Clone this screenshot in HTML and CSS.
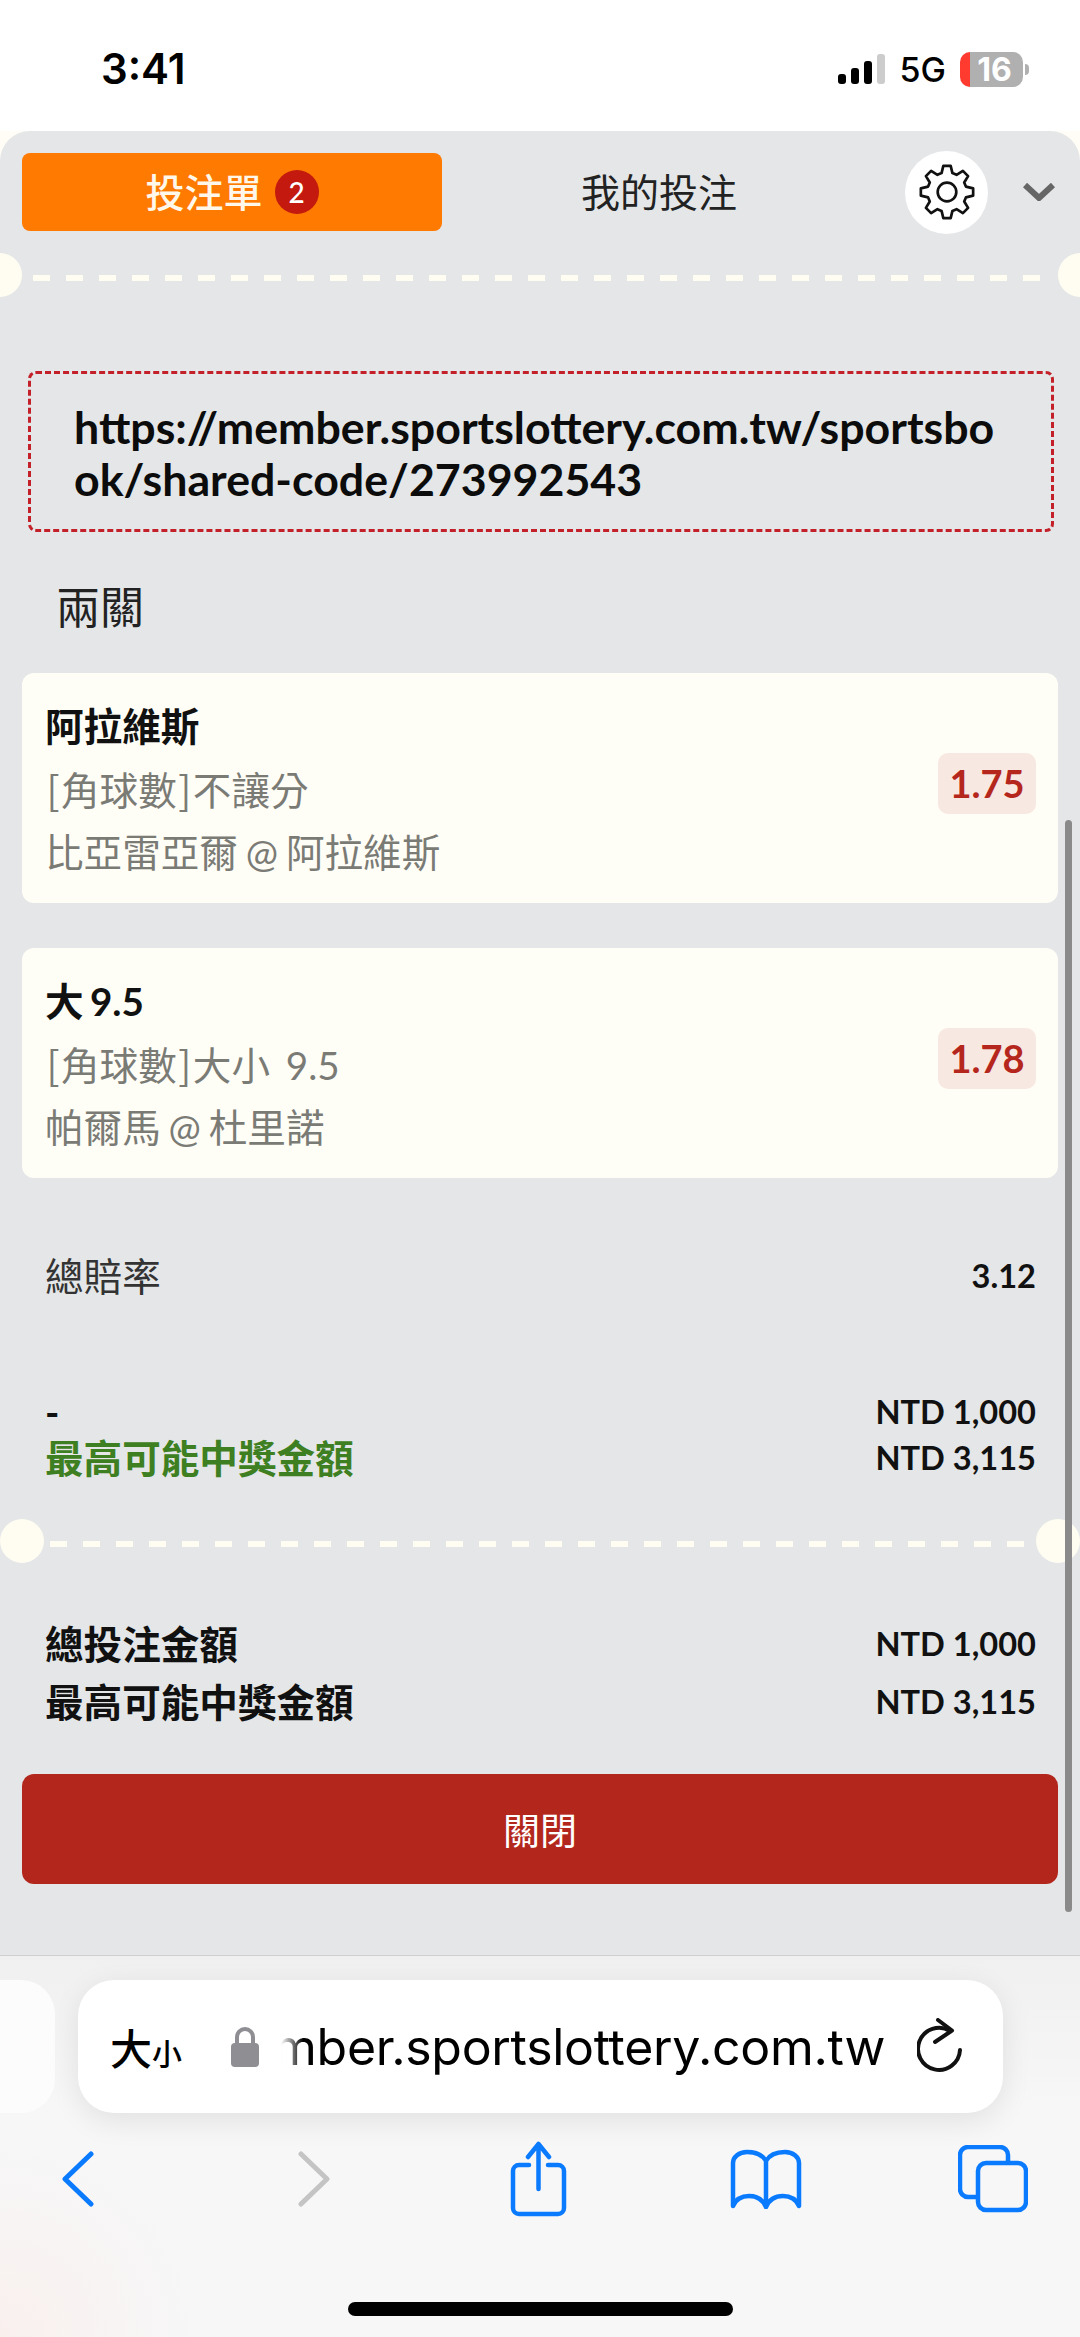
FILE: index.html
```html
<!DOCTYPE html>
<html lang="zh-Hant">

<head>
    <meta charset="UTF-8">
    <meta name="viewport" content="width=device-width, initial-scale=1.0">
    <title>投注單</title>
    <link rel="stylesheet" href="styles.css">
</head>

<body>
    <!-- Status bar -->
    <header class="status-bar">
        <span class="clock">3:41</span>
        <div class="status-icons">
            <div class="signal">
                <i class="bar bar-1"></i>
                <i class="bar bar-2"></i>
                <i class="bar bar-3"></i>
                <i class="bar bar-4"></i>
            </div>
            <span class="network">5G</span>
            <div class="battery"><span class="battery-num">16</span></div>
            <i class="battery-nub"></i>
        </div>
    </header>

    <!-- Bet slip panel -->
    <main class="panel">
        <div class="tabs">
            <button class="tab tab-active">投注單<span class="badge">2</span></button>
            <button class="tab tab-plain">我的投注</button>
            <button class="gear-btn">
                <svg class="gear" viewBox="-28 -28 56 56" fill="none" stroke="#111" stroke-width="2.6" stroke-linejoin="round">
                    <polygon points="-5.24,-18.26 -3.55,-25.25 3.55,-25.25 5.24,-18.26 9.21,-16.62 15.34,-20.36 20.36,-15.34 16.62,-9.21 18.26,-5.24 25.25,-3.55 25.25,3.55 18.26,5.24 16.62,9.21 20.36,15.34 15.34,20.36 9.21,16.62 5.24,18.26 3.55,25.25 -3.55,25.25 -5.24,18.26 -9.21,16.62 -15.34,20.36 -20.36,15.34 -16.62,9.21 -18.26,5.24 -25.25,3.55 -25.25,-3.55 -18.26,-5.24 -16.62,-9.21 -20.36,-15.34 -15.34,-20.36 -9.21,-16.62" />
                    <circle cx="0" cy="0" r="9" />
                </svg>
            </button>
            <svg class="collapse" viewBox="0 0 32 18" fill="none" stroke="#666" stroke-width="6">
                <path d="M2 2 L16 15 L30 2" />
            </svg>
        </div>

        <div class="sep sep-top"></div>

        <div class="share-link">https://member.sportslottery.com.tw/sportsbook/shared-code/273992543</div>

        <h2 class="parlay">兩關</h2>

        <!-- Selections -->
        <section class="card">
            <div class="card-text">
                <p class="pick">阿拉維斯</p>
                <p class="market"><span class="bracket">[</span>角球數<span class="bracket">]</span>不讓分</p>
                <p class="market market-at">比亞雷亞爾 @ 阿拉維斯</p>
            </div>
            <span class="odds">1.75</span>
        </section>

        <section class="card card-next">
            <div class="card-text">
                <p class="pick">大 9.5</p>
                <p class="market market-num"><span class="bracket">[</span>角球數<span class="bracket">]</span>大小 9.5</p>
                <p class="market market-at">帕爾馬 @ 杜里諾</p>
            </div>
            <span class="odds">1.78</span>
        </section>

        <div class="row row-odds">
            <span class="row-plain">總賠率</span>
            <b class="row-num">3.12</b>
        </div>

        <div class="stake">
            <div class="row row-stake">
                <b>-</b>
                <b class="row-num">NTD 1,000</b>
            </div>
            <div class="row row-stake">
                <b class="win">最高可能中獎金額</b>
                <b class="row-num">NTD 3,115</b>
            </div>
        </div>

        <div class="sep sep-mid"></div>

        <div class="totals">
            <div class="row row-total">
                <b>總投注金額</b>
                <b class="row-num">NTD 1,000</b>
            </div>
            <div class="row row-total">
                <b>最高可能中獎金額</b>
                <b class="row-num">NTD 3,115</b>
            </div>
        </div>

        <button class="close-btn">關閉</button>

        <i class="scrollbar"></i>
    </main>

    <!-- Browser toolbar -->
    <footer class="toolbar">
        <div class="address-row">
            <div class="prev-pill"></div>
            <div class="address">
                <span class="text-size">大<small>小</small></span>
                <svg class="lock" viewBox="0 0 28 40">
                    <path d="M6 18 V10 a8 8 0 0 1 16 0 V18" fill="none" stroke="#8e8e93" stroke-width="4" />
                    <rect x="0" y="16" width="28" height="24" rx="4" fill="#8e8e93" />
                </svg>
                <div class="url">mber.sportslottery.com.tw</div>
                <svg class="reload" viewBox="0 0 46 58" fill="none" stroke="#111" stroke-width="4" stroke-linecap="round" stroke-linejoin="round">
                    <path d="M33 13 A21 21 0 1 0 43 32" />
                    <path d="M21 2 L35 12.5 L18 24" />
                </svg>
            </div>
        </div>

        <nav class="nav-icons">
            <svg class="nav-back" viewBox="0 0 32 56" fill="none" stroke="#0a7aff" stroke-width="5" stroke-linecap="round" stroke-linejoin="round">
                <path d="M29 3 L3 28 L29 53" />
            </svg>
            <svg class="nav-forward" viewBox="0 0 32 56" fill="none" stroke="#c4c4c4" stroke-width="5" stroke-linecap="round" stroke-linejoin="round">
                <path d="M3 3 L29 28 L3 53" />
            </svg>
            <svg class="nav-share" viewBox="0 0 57 76" fill="none" stroke="#0a7aff" stroke-width="4.5" stroke-linecap="round" stroke-linejoin="round">
                <path d="M19 24 H9 a6 6 0 0 0 -6 6 V67 a6 6 0 0 0 6 6 H48 a6 6 0 0 0 6 -6 V30 a6 6 0 0 0 -6 -6 H38" />
                <path d="M28.5 48 V3 M18 16 L28.5 3 L39 16" />
            </svg>
            <svg class="nav-book" viewBox="0 0 72 60" fill="none" stroke="#0a7aff" stroke-width="4.5" stroke-linejoin="round">
                <path d="M36 12 C32 5 25 3 17 3 C9 3 3 8 3 14 V57 C6 50 12 47 19 47 C27 47 33 51 36 58 C39 51 45 47 53 47 C60 47 66 50 69 57 V14 C69 8 63 3 55 3 C47 3 40 5 36 12 Z M36 12 V58" />
            </svg>
            <svg class="nav-tabs" viewBox="0 0 70 68" fill="none" stroke="#0a7aff" stroke-width="4.5">
                <path d="M50 17 V10 a8 8 0 0 0 -8 -8 H10 a8 8 0 0 0 -8 8 V44 a8 8 0 0 0 8 8 h8" />
                <rect x="20" y="18" width="48" height="47" rx="8" />
            </svg>
        </nav>

        <div class="home-bar"></div>
    </footer>
</body>

</html>
```

FILE: styles.css
```css
/* Basic layout */

* {
    box-sizing: border-box;
}

body {
    margin: 0;
    width: 1080px;
    height: 2337px;
    overflow: hidden;
    background-color: #fffdf5;
    font-family: Lato, "Noto Sans CJK TC", sans-serif;
    color: #111;
}

p,
h2 {
    margin: 0;
    font-weight: normal;
}

button {
    border: 0;
    padding: 0;
    font-family: inherit;
}

/* Status bar */

.status-bar {
    height: 131px;
    background-color: #fff;
    display: flex;
    justify-content: space-between;
    padding: 44px 51px 0 101px;
}

.clock {
    font-family: Inter, sans-serif;
    font-size: 42px;
    font-weight: 600;
    line-height: 50px;
    color: #000;
}

.status-icons {
    display: flex;
    height: 50px;
    align-items: center;
}

.signal {
    display: flex;
    align-items: flex-end;
    gap: 5px;
    height: 30px;
}

.bar {
    width: 8px;
    border-radius: 3px;
    background-color: #000;
}

.bar-1 {
    height: 10px;
}

.bar-2 {
    height: 16px;
}

.bar-3 {
    height: 23px;
}

.bar-4 {
    height: 30px;
    background-color: #ccc;
}

.network {
    font-family: Inter, sans-serif;
    font-size: 34px;
    font-weight: 500;
    margin-left: 15px;
    color: #000;
}

.battery {
    width: 63px;
    height: 35px;
    margin-left: 14px;
    border-radius: 10px;
    background: linear-gradient(to right, #ff3b30 10px, #b0b0b0 10px);
    color: #fff;
    text-align: center;
    font-family: Inter, sans-serif;
    font-size: 32px;
    font-weight: 700;
    line-height: 35px;
}

.battery-num {
    margin-left: 6px;
}

.battery-nub {
    width: 4px;
    height: 11px;
    margin-left: 2px;
    border-radius: 0 4px 4px 0;
    background-color: #b0b0b0;
}

/* Panel */

.panel {
    position: relative;
    height: 1824px;
    padding: 20px 22px 0;
    background-color: #e4e6e8;
    border-radius: 30px 30px 0 0;
    overflow: hidden;
}

.tabs {
    display: flex;
    align-items: center;
    height: 82px;
}

.tab {
    font-size: 39px;
    line-height: 78px;
    height: 78px;
    background: none;
}

.tab-active {
    width: 420px;
    display: flex;
    justify-content: center;
    align-items: center;
    background-color: #ff7a00;
    border-radius: 8px;
    color: #fff8ea;
    font-weight: 500;
}

.tab-plain {
    width: 434px;
    color: #222;
}

.badge {
    width: 44px;
    height: 44px;
    margin-left: 12px;
    border-radius: 50%;
    background-color: #c4190f;
    color: #fff;
    font-size: 28px;
    font-weight: 500;
    line-height: 44px;
    text-align: center;
}

.gear-btn {
    width: 83px;
    height: 83px;
    margin-left: 29px;
    border-radius: 50%;
    background-color: #fff;
    display: flex;
    align-items: center;
    justify-content: center;
}

.gear {
    width: 58px;
    height: 58px;
}

.collapse {
    width: 32px;
    height: 18px;
    margin-left: 35px;
}

/* Dashed ticket separator */

.sep {
    position: relative;
    height: 44px;
    margin-left: -22px;
    margin-right: -22px;
}

.sep::before,
.sep::after {
    content: "";
    position: absolute;
    top: 0;
    width: 44px;
    height: 44px;
    border-radius: 50%;
    background-color: #fffdf2;
}

.sep-top {
    margin-top: 20px;
    background: repeating-linear-gradient(to right, #fffdf2 0 17px, transparent 17px 33px) 33px 22px / 1017px 6px no-repeat;
}

.sep-top::before {
    left: -22px;
}

.sep-top::after {
    right: -22px;
}

.sep-mid {
    margin-top: 38px;
    background: repeating-linear-gradient(to right, #fffdf2 0 17px, transparent 17px 33px) 50px 22px / 982px 6px no-repeat;
}

.sep-mid::before {
    left: 0;
}

.sep-mid::after {
    right: 0;
}

/* Shared link */

.share-link {
    margin: 74px 4px 0 6px;
    height: 161px;
    padding: 27px 44px 0 43px;
    border: 3px dashed #c4202a;
    border-radius: 8px;
    font-size: 44.7px;
    font-weight: 700;
    line-height: 52px;
    word-break: break-all;
    color: #0c0c0c;
}

.parlay {
    margin-top: 45px;
    padding-left: 34px;
    font-size: 44px;
    line-height: 60px;
    color: #222;
}

/* Selection cards */

.card {
    height: 230px;
    margin-top: 36px;
    padding: 22px 22px 0 23px;
    background-color: #fffef6;
    border-radius: 12px;
    display: flex;
    justify-content: space-between;
}

.card-next {
    margin-top: 45px;
}

.card-text p {
    font-size: 38.6px;
    line-height: 62px;
}

.pick {
    font-weight: 700;
    color: #111;
    word-spacing: -3px;
}

.market {
    color: #7b7b76;
}

.market-at {
    word-spacing: -2px;
}

.market-num {
    word-spacing: 6px;
}

.bracket {
    padding: 0 1.5px;
    font-family: "Noto Sans CJK TC", sans-serif;
}

.odds {
    width: 98px;
    height: 61px;
    margin-top: 58px;
    border-radius: 10px;
    background-color: #f8e8e2;
    color: #b5261c;
    font-size: 38px;
    font-weight: 700;
    line-height: 61px;
    text-align: center;
}

/* Amount rows */

.row {
    display: flex;
    justify-content: space-between;
    padding: 0 22px 0 23px;
    font-size: 38.6px;
}

.row-num {
    font-size: 32.6px;
}

.row-odds {
    margin-top: 73px;
    line-height: 50px;
}

.row-plain {
    color: #333;
}

.stake {
    margin-top: 88px;
}

.row-stake {
    line-height: 46px;
}

.win {
    color: #3d7f21;
}

.totals {
    margin-top: 52px;
}

.row-total {
    line-height: 58px;
}

.close-btn {
    display: block;
    width: 100%;
    height: 110px;
    margin-top: 43px;
    border-radius: 12px;
    background-color: #b3261c;
    color: #fff;
    font-size: 37px;
}

.scrollbar {
    position: absolute;
    top: 689px;
    right: 8px;
    width: 7px;
    height: 1092px;
    border-radius: 4px;
    background-color: #8a8a8a;
}

/* Browser toolbar */

.toolbar {
    height: 382px;
    padding-top: 24px;
    border-top: 1px solid #cfcfd1;
    background:
        radial-gradient(circle at 0 100%, #f9f0ee 0, rgba(249, 240, 238, 0) 200px),
        linear-gradient(#f0f0f1, #f7f7f8 40%);
}

.address-row {
    display: flex;
    height: 133px;
}

.prev-pill {
    width: 55px;
    background-color: #fcfcfc;
    border-radius: 0 34px 34px 0;
}

.address {
    width: 925px;
    margin-left: 23px;
    padding-left: 32px;
    display: flex;
    align-items: center;
    background-color: #fff;
    border-radius: 36px;
    box-shadow: 0 8px 30px rgba(0, 0, 0, 0.09);
}

.text-size {
    width: 76px;
    font-size: 42px;
    font-weight: 500;
    color: #000;
    white-space: nowrap;
}

.text-size small {
    font-size: 30px;
}

.lock {
    width: 28px;
    height: 40px;
    margin-left: 45px;
}

.url {
    width: 626px;
    text-align: right;
    white-space: nowrap;
    font-family: Inter, sans-serif;
    font-size: 50px;
    letter-spacing: -0.3px;
    color: #000;
    -webkit-mask-image: linear-gradient(to right, transparent 22px, #000 44px);
    mask-image: linear-gradient(to right, transparent 22px, #000 44px);
}

.reload {
    width: 46px;
    height: 58px;
    margin-left: 32px;
}

.nav-icons {
    display: flex;
    align-items: center;
    height: 76px;
    margin-top: 28px;
    padding-left: 62px;
}

.nav-back,
.nav-forward {
    width: 32px;
    height: 56px;
}

.nav-forward {
    margin-left: 204px;
}

.nav-share {
    width: 57px;
    height: 76px;
    margin-left: 180px;
}

.nav-book {
    width: 72px;
    height: 60px;
    margin-left: 163px;
}

.nav-tabs {
    width: 70px;
    height: 68px;
    margin-left: 156px;
}

.home-bar {
    width: 385px;
    height: 14px;
    margin: 85px auto 0;
    border-radius: 7px;
    background-color: #000;
}
```
